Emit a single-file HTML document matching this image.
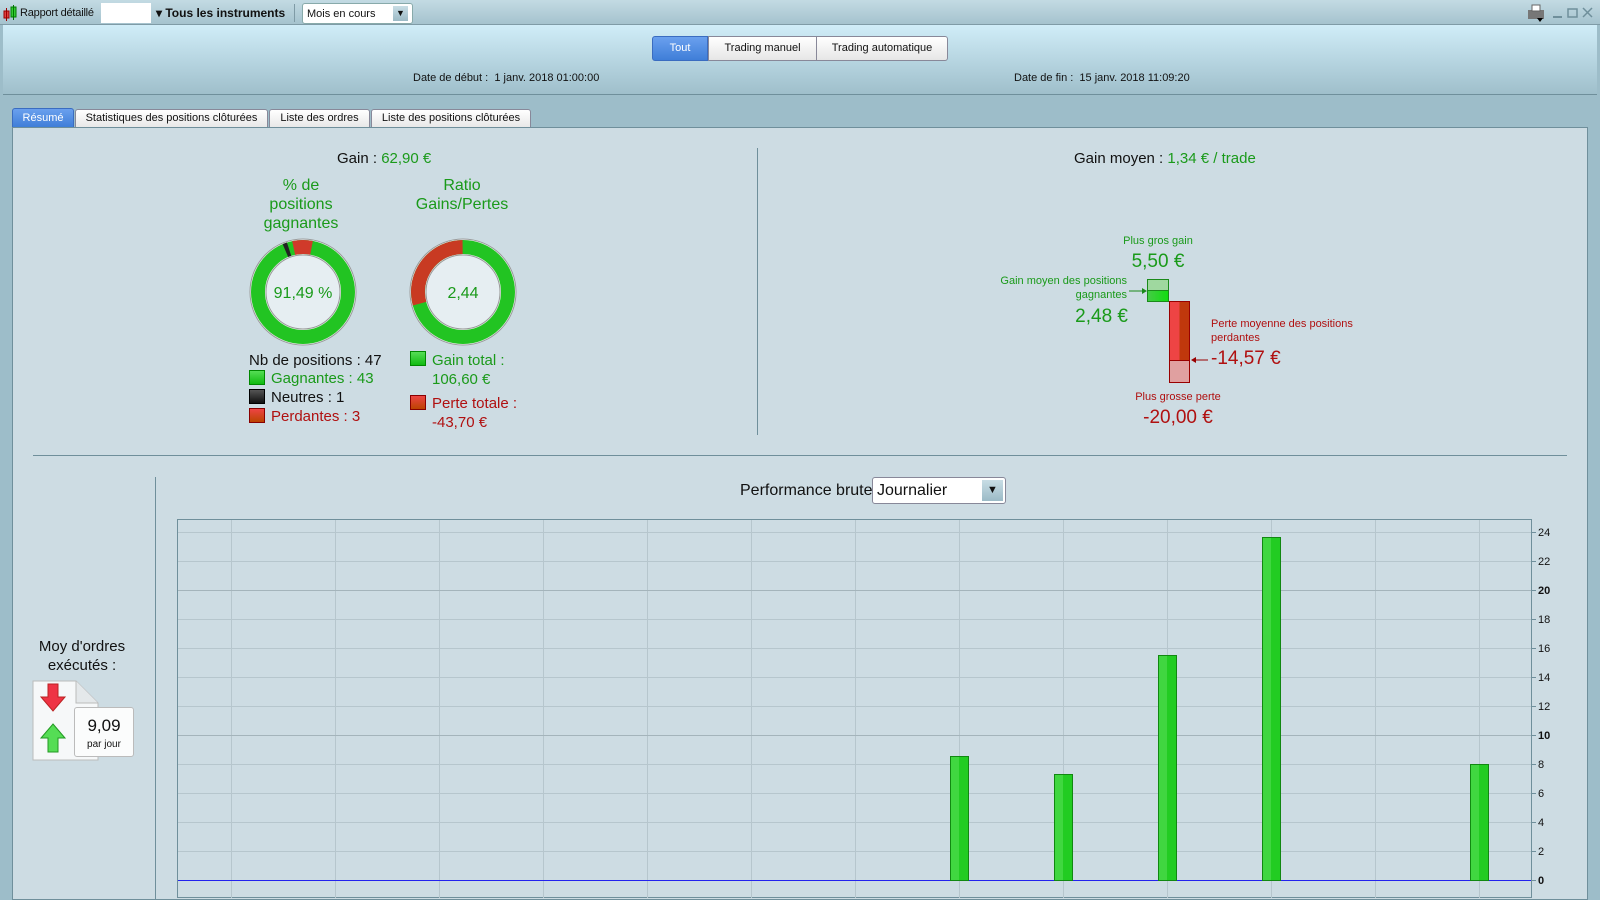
<!DOCTYPE html>
<html><head><meta charset="utf-8"><style>
*{margin:0;padding:0;box-sizing:border-box}
body{width:1600px;height:900px;overflow:hidden;background:#9dbdc9;font-family:"Liberation Sans",Arial,sans-serif;position:relative;color:#111}
.a{position:absolute;white-space:nowrap}
.g{color:#1a9a1a}.r{color:#b01010}
</style></head><body>
<!-- toolbar -->
<div class="a" style="left:0;top:0;width:1600px;height:25px;background:linear-gradient(#c3dbe3,#a5c3ce);border-bottom:1px solid #7f9ba6"></div>
<svg class="a" style="left:3px;top:5px" width="16" height="16"><rect x="1" y="6" width="5" height="7" fill="#e04040" stroke="#900" stroke-width="1"/><line x1="3.5" y1="3" x2="3.5" y2="16" stroke="#900"/><rect x="8" y="2" width="5" height="10" fill="#3c3" stroke="#070"/><line x1="10.5" y1="0" x2="10.5" y2="15" stroke="#070"/></svg>
<div class="a" style="left:20px;top:7px;font-size:11px;letter-spacing:-0.2px">Rapport détaillé</div>
<div class="a" style="left:101px;top:3px;width:50px;height:20px;background:#fff"></div>
<div class="a" style="left:156px;top:6px;font-size:12px;font-weight:bold">▾ Tous les instruments</div>
<div class="a" style="left:294px;top:4px;width:1px;height:18px;background:#7f9ba6"></div>
<div class="a" style="left:302px;top:3px;width:111px;height:21px;background:#fff;border:1px solid #8aa;border-radius:3px;font-size:11px;padding:4px 4px">Mois en cours</div>
<div class="a" style="left:393px;top:6px;width:15px;height:15px;background:linear-gradient(#c8dde5,#9bbac6);font-size:9px;text-align:center;line-height:15px">▼</div>
<svg class="a" style="left:1526px;top:4px" width="70" height="18"><rect x="2" y="6" width="16" height="9" fill="#777"/><rect x="6" y="1" width="8" height="6" fill="#fff" stroke="#666"/><polygon points="11,14 17,14 14,18" fill="#000"/><line x1="27" y1="13" x2="36" y2="13" stroke="#6f8f9b" stroke-width="2"/><rect x="42" y="5" width="9" height="8" fill="none" stroke="#6f8f9b" stroke-width="1.5"/><path d="M57 4 L66 13 M66 4 L57 13" stroke="#6f8f9b" stroke-width="1.5"/></svg>
<!-- header -->
<div class="a" style="left:3px;top:25px;width:1594px;height:70px;background:linear-gradient(#d0edf8,#9fbfcb);border-bottom:1px solid #6f8f9b"></div>
<div class="a" style="left:652px;top:36px;width:56px;height:25px;background:linear-gradient(#6aa0ee,#3f7ed8);border:1px solid #3a6cc0;border-radius:3px 0 0 3px;color:#fff;font-size:11px;text-align:center;line-height:23px">Tout</div>
<div class="a" style="left:708px;top:36px;width:109px;height:25px;background:linear-gradient(#fff,#e6e6e6);border:1px solid #889;font-size:11px;text-align:center;line-height:23px">Trading manuel</div>
<div class="a" style="left:816px;top:36px;width:132px;height:25px;background:linear-gradient(#fff,#e6e6e6);border:1px solid #889;border-radius:0 3px 3px 0;font-size:11px;text-align:center;line-height:23px">Trading automatique</div>
<div class="a" style="left:413px;top:72px;font-size:11px">Date de début :&nbsp; 1 janv. 2018 01:00:00</div>
<div class="a" style="left:1014px;top:72px;font-size:11px">Date de fin :&nbsp; 15 janv. 2018 11:09:20</div>
<!-- tabs -->
<div class="a" style="left:12px;top:108px;width:62px;height:20px;background:linear-gradient(#6aa0ee,#3f7ed8);border:1px solid #3a6cc0;border-radius:3px 3px 0 0;color:#fff;font-size:11px;text-align:center;line-height:18px">Résumé</div>
<div class="a" style="left:75px;top:109px;width:193px;height:19px;background:linear-gradient(#fff,#e8e8e8);border:1px solid #889;border-radius:3px 3px 0 0;font-size:11px;text-align:center;line-height:17px">Statistiques des positions clôturées</div>
<div class="a" style="left:269px;top:109px;width:101px;height:19px;background:linear-gradient(#fff,#e8e8e8);border:1px solid #889;border-radius:3px 3px 0 0;font-size:11px;text-align:center;line-height:17px">Liste des ordres</div>
<div class="a" style="left:371px;top:109px;width:160px;height:19px;background:linear-gradient(#fff,#e8e8e8);border:1px solid #889;border-radius:3px 3px 0 0;font-size:11px;text-align:center;line-height:17px">Liste des positions clôturées</div>
<!-- content -->
<div class="a" style="left:12px;top:127px;width:1576px;height:773px;background:#cddce3;border:1px solid #6f8f9b"></div>
<div class="a" style="left:757px;top:148px;width:1px;height:287px;background:#6f8f9b"></div>
<div class="a" style="left:33px;top:455px;width:1534px;height:1px;background:#6f8f9b"></div>
<div class="a" style="left:155px;top:477px;width:1px;height:423px;background:#6f8f9b"></div>

<div class="a" style="left:337px;top:150px;font-size:15px">Gain : <span class="g">62,90 €</span></div>
<div class="a g" style="left:221px;top:176px;width:160px;text-align:center;font-size:16px;line-height:19px;white-space:normal">% de<br>positions<br>gagnantes</div>
<div class="a g" style="left:382px;top:176px;width:160px;text-align:center;font-size:16px;line-height:19px;white-space:normal">Ratio<br>Gains/Pertes</div>
<svg class="a" style="left:240px;top:230px" width="300" height="125">
<g transform="translate(63,62)">
<circle r="53" fill="#f4f7f8" stroke="#999"/>
<circle r="45" fill="none" stroke="#22c422" stroke-width="14"/>
<circle r="45" fill="none" stroke="#d03a2a" stroke-width="14" stroke-dasharray="18 300" transform="rotate(-102)"/>
<circle r="45" fill="none" stroke="#222" stroke-width="14" stroke-dasharray="4 300" transform="rotate(-113)"/>
<circle r="37" fill="#e6eef2" stroke="#999"/>
<text x="0" y="6" text-anchor="middle" font-size="16" fill="#1a9a1a" font-family="Liberation Sans">91,49 %</text>
</g>
<g transform="translate(223,62)">
<circle r="53" fill="#f4f7f8" stroke="#999"/>
<circle r="45" fill="none" stroke="#22c422" stroke-width="14"/>
<circle r="45" fill="none" stroke="#c83a22" stroke-width="14" stroke-dasharray="82 300" transform="rotate(-195)"/>
<circle r="37" fill="#e6eef2" stroke="#999"/>
<text x="0" y="6" text-anchor="middle" font-size="16" fill="#1a9a1a" font-family="Liberation Sans">2,44</text>
</g></svg>
<div class="a" style="left:249px;top:351px;font-size:15px;line-height:19px">Nb de positions : 47</div>
<div class="a" style="left:249px;top:370px;width:16px;height:15px;background:linear-gradient(#5d5,#1b1);border:1px solid #080"></div>
<div class="a g" style="left:271px;top:370px;font-size:15px">Gagnantes : 43</div>
<div class="a" style="left:249px;top:389px;width:16px;height:15px;background:linear-gradient(#555,#111);border:1px solid #000"></div>
<div class="a" style="left:271px;top:389px;font-size:15px">Neutres : 1</div>
<div class="a" style="left:249px;top:408px;width:16px;height:15px;background:linear-gradient(#e44,#b40);border:1px solid #800"></div>
<div class="a r" style="left:271px;top:408px;font-size:15px">Perdantes : 3</div>
<div class="a" style="left:410px;top:351px;width:16px;height:15px;background:linear-gradient(#5d5,#1b1);border:1px solid #080"></div>
<div class="a g" style="left:432px;top:351px;font-size:15px;line-height:19px">Gain total :<br>106,60 €</div>
<div class="a" style="left:410px;top:395px;width:16px;height:15px;background:linear-gradient(#e44,#b40);border:1px solid #800"></div>
<div class="a r" style="left:432px;top:394px;font-size:15px;line-height:19px">Perte totale :<br>-43,70 €</div>

<div class="a" style="left:1074px;top:150px;font-size:15px">Gain moyen : <span class="g">1,34 € / trade</span></div>
<div class="a g" style="left:1108px;top:235px;width:100px;text-align:center;font-size:11px">Plus gros gain</div>
<div class="a g" style="left:1108px;top:251px;width:100px;text-align:center;font-size:19px">5,50 €</div>
<div class="a g" style="left:975px;top:274px;width:152px;text-align:right;font-size:11px;line-height:14px">Gain moyen des positions<br>gagnantes</div>
<div class="a g" style="left:1028px;top:306px;width:100px;text-align:right;font-size:19px">2,48 €</div>
<div class="a" style="left:1147px;top:279px;width:22px;height:12px;background:#9fd89f;border:1px solid #1a8a1a"></div>
<div class="a" style="left:1147px;top:290px;width:22px;height:12px;background:linear-gradient(90deg,#4c4,#1d1);border:1px solid #1a8a1a"></div>
<svg class="a" style="left:1129px;top:286px" width="20" height="10"><line x1="0" y1="5" x2="16" y2="5" stroke="#1a8a1a"/><polygon points="13,2 18,5 13,8" fill="#1a8a1a"/></svg>
<div class="a" style="left:1169px;top:301px;width:21px;height:60px;background:linear-gradient(90deg,#e44 50%,#c0380c 50%);border:1px solid #900"></div>
<div class="a" style="left:1169px;top:360px;width:21px;height:23px;background:#e0a0a0;border:1px solid #900"></div>
<svg class="a" style="left:1190px;top:355px" width="20" height="10"><line x1="3" y1="5" x2="18" y2="5" stroke="#900"/><polygon points="6,2 1,5 6,8" fill="#900"/></svg>
<div class="a r" style="left:1211px;top:317px;font-size:11px;line-height:14px">Perte moyenne des positions<br>perdantes</div>
<div class="a r" style="left:1211px;top:348px;font-size:19px">-14,57 €</div>
<div class="a r" style="left:1118px;top:391px;width:120px;text-align:center;font-size:11px">Plus grosse perte</div>
<div class="a r" style="left:1118px;top:407px;width:120px;text-align:center;font-size:19px">-20,00 €</div>

<!-- bottom left -->
<div class="a" style="left:22px;top:637px;width:120px;text-align:center;font-size:15px;line-height:19px">Moy d'ordres<br>exécutés :</div>
<svg class="a" style="left:32px;top:680px" width="106" height="82">
<path d="M1 1 H44 L66 23 V80 H1 Z" fill="#f6f8f9" stroke="#bbb"/><path d="M44 1 V23 H66" fill="#e4e8ea" stroke="#bbb"/>
<polygon points="16,4 26,4 26,17 33,17 21,31 9,17 16,17" fill="#e34" stroke="#b22"/>
<polygon points="21,44 33,58 26,58 26,72 16,72 16,58 9,58" fill="#5d5" stroke="#292"/>
</svg>
<div class="a" style="left:74px;top:707px;width:60px;height:50px;background:#fbfcfc;border:1px solid #bbb;border-radius:3px;text-align:center">
<div style="font-size:17px;margin-top:8px">9,09</div><div style="font-size:10px;margin-top:3px">par jour</div></div>

<!-- chart -->
<div class="a" style="left:740px;top:482px;font-size:16px">Performance brute</div>
<div class="a" style="left:872px;top:477px;width:134px;height:27px;background:#fff;border:1px solid #889;border-radius:3px;font-size:16px;padding:4px 4px">Journalier</div>
<div class="a" style="left:982px;top:480px;width:21px;height:21px;background:linear-gradient(#c8dde5,#9bbac6);font-size:11px;text-align:center;line-height:21px">▼</div>
<svg class="a" style="left:0;top:0" width="1600" height="900" font-family="Liberation Sans" font-size="11">
<rect x="177.5" y="519.5" width="1354" height="378" fill="none" stroke="#6f8f9b"/>
<g stroke="#b6c6cd">
<path d="M178 532.5H1531M178 561.5H1531M178 619.5H1531M178 648.5H1531M178 677.5H1531M178 706.5H1531M178 764.5H1531M178 793.5H1531M178 822.5H1531M178 851.5H1531"/>
<path d="M231.5 520V898M335.5 520V898M439.5 520V898M543.5 520V898M647.5 520V898M751.5 520V898M855.5 520V898M959.5 520V898M1063.5 520V898M1167.5 520V898M1271.5 520V898M1375.5 520V898M1479.5 520V898"/>
</g>
<path d="M178 590.5H1531M178 735.5H1531" stroke="#a4b4bb"/>
<line x1="178" y1="880.5" x2="1531" y2="880.5" stroke="#2222ee"/>
<g fill="#22cc22" stroke="#118811">
<rect x="950.5" y="756.5" width="18" height="124"/>
<rect x="1054.5" y="774.5" width="18" height="106"/>
<rect x="1158.5" y="655.5" width="18" height="225"/>
<rect x="1262.5" y="537.5" width="18" height="343"/>
<rect x="1470.5" y="764.5" width="18" height="116"/>
</g>
<g fill="#55dd55" opacity=".6"><rect x="951" y="757" width="8" height="123"/><rect x="1055" y="775" width="8" height="105"/><rect x="1159" y="656" width="8" height="224"/><rect x="1263" y="538" width="8" height="342"/><rect x="1471" y="765" width="8" height="115"/></g>
<g stroke="#6f8f9b"><path d="M1531 532.5h5M1531 561.5h5M1531 590.5h5M1531 619.5h5M1531 648.5h5M1531 677.5h5M1531 706.5h5M1531 735.5h5M1531 764.5h5M1531 793.5h5M1531 822.5h5M1531 851.5h5M1531 880.5h5"/></g>
<g fill="#111">
<text x="1538" y="536">24</text><text x="1538" y="565">22</text><text x="1538" y="594" font-weight="bold">20</text><text x="1538" y="623">18</text><text x="1538" y="652">16</text><text x="1538" y="681">14</text><text x="1538" y="710">12</text><text x="1538" y="739" font-weight="bold">10</text><text x="1538" y="768">8</text><text x="1538" y="797">6</text><text x="1538" y="826">4</text><text x="1538" y="855">2</text><text x="1538" y="884" font-weight="bold">0</text>
</g>
</svg>
</body></html>
